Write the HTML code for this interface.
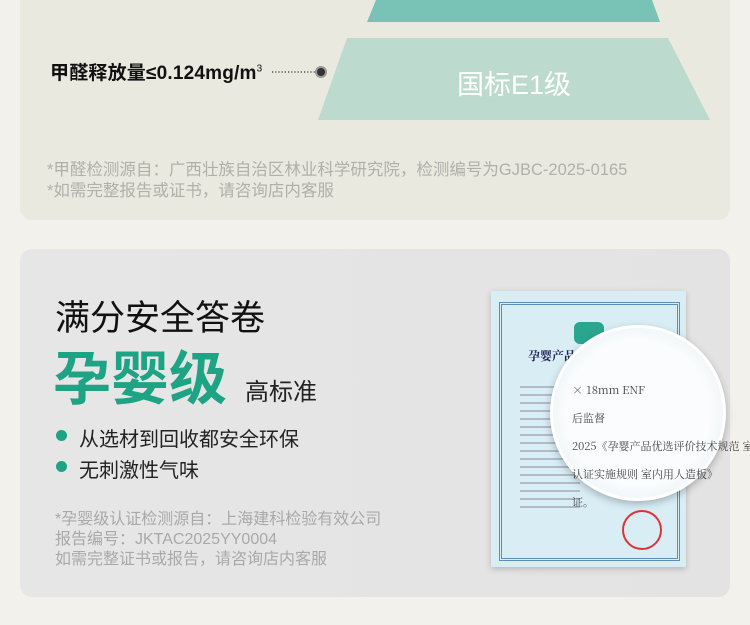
<!DOCTYPE html><html><head><meta charset="utf-8"><style>
body{margin:0;width:750px;height:625px;background:#f3f1ec;position:relative;overflow:hidden;font-family:"Liberation Sans","Noto Sans CJK SC",sans-serif}
.a{position:absolute;white-space:nowrap}
</style></head><body>
<div class="a" style="left:20px;top:-20px;width:710px;height:240px;background:#e9e9df;border-radius:12px"></div>
<svg class="a" style="left:0;top:0" width="750" height="130">
<polygon points="376,0 652,0 660,22 367,22" fill="#78c3b6"/>
<polygon points="347,38 668,38 710,120 318,120" fill="#bcdacd"/>
<line x1="272" y1="72" x2="316" y2="72" stroke="#333" stroke-width="1.2" stroke-dasharray="1.2 2"/>
<circle cx="321" cy="72" r="5" fill="#333" stroke="#999" stroke-width="2"/>
</svg>
<div class="a" style="left:457px;top:63px;font-size:27px;color:#fff">国标E1级</div>
<div class="a" style="left:50px;top:58px;font-size:19px;font-weight:bold;color:#111;letter-spacing:0.2px">甲醛释放量≤0.124mg/m<sup style="font-size:10px;font-weight:normal">3</sup></div>
<div class="a" style="left:47px;top:160px;font-size:16.5px;color:#b0b0aa;line-height:21px">*甲醛检测源自：广西壮族自治区林业科学研究院，检测编号为GJBC-2025-0165<br>*如需完整报告或证书，请咨询店内客服</div>
<div class="a" style="left:20px;top:249px;width:710px;height:348px;background:linear-gradient(90deg,#e6e6e6,#e3e3e3);border-radius:12px"></div>
<div class="a" style="left:55px;top:290px;font-size:35px;color:#111">满分安全答卷</div>
<div class="a" style="left:53px;top:332px;font-size:58px;font-weight:bold;color:#1ea384;letter-spacing:0px">孕婴级</div>
<div class="a" style="left:245px;top:372px;font-size:24px;color:#222">高标准</div>
<div class="a" style="left:56px;top:430px;width:11px;height:11px;border-radius:50%;background:#1ea384"></div>
<div class="a" style="left:79px;top:423px;font-size:20px;color:#222">从选材到回收都安全环保</div>
<div class="a" style="left:56px;top:461px;width:11px;height:11px;border-radius:50%;background:#1ea384"></div>
<div class="a" style="left:79px;top:454px;font-size:20px;color:#222">无刺激性气味</div>
<div class="a" style="left:55px;top:510px;font-size:16px;color:#a9a9a9;line-height:20px">*孕婴级认证检测源自：上海建科检验有效公司<br>报告编号：JKTAC2025YY0004<br>如需完整证书或报告，请咨询店内客服</div>
<div class="a" style="left:491px;top:291px;width:195px;height:276px;background:#d9edf5;box-shadow:0 2px 6px rgba(0,0,0,.2)"></div>
<div class="a" style="left:499px;top:302px;width:175px;height:253px;border:3px double #5b8fb5"></div>
<div class="a" style="left:574px;top:322px;width:30px;height:22px;background:#2aa68f;border-radius:6px"></div>
<div class="a" style="left:528px;top:347px;font-size:12px;font-weight:bold;color:#225;font-family:'Noto Serif CJK SC',serif">孕婴产品优选</div>
<div class="a" style="left:520px;top:380px;width:60px;height:130px;background:repeating-linear-gradient(#d9edf5 0 6px,#99a 6px 8px);opacity:.6"></div>
<div class="a" style="left:622px;top:510px;width:36px;height:36px;border-radius:50%;border:2px solid #d33"></div>
<div class="a" style="left:550px;top:325px;width:170px;height:170px;border-radius:50%;background:radial-gradient(circle,#fafcfd 60%,#dfe8ee);box-shadow:0 3px 8px rgba(0,0,0,.25);border:3px solid #fff"></div>
<div class="a" style="left:572px;top:376px;font-size:11px;color:#444;line-height:28px;font-family:'Noto Serif CJK SC',serif">× 18mm ENF<br>后监督<br>2025《孕婴产品优选评价技术规范 室<br>认证实施规则 室内用人造板》<br>证。</div>
</body></html>
